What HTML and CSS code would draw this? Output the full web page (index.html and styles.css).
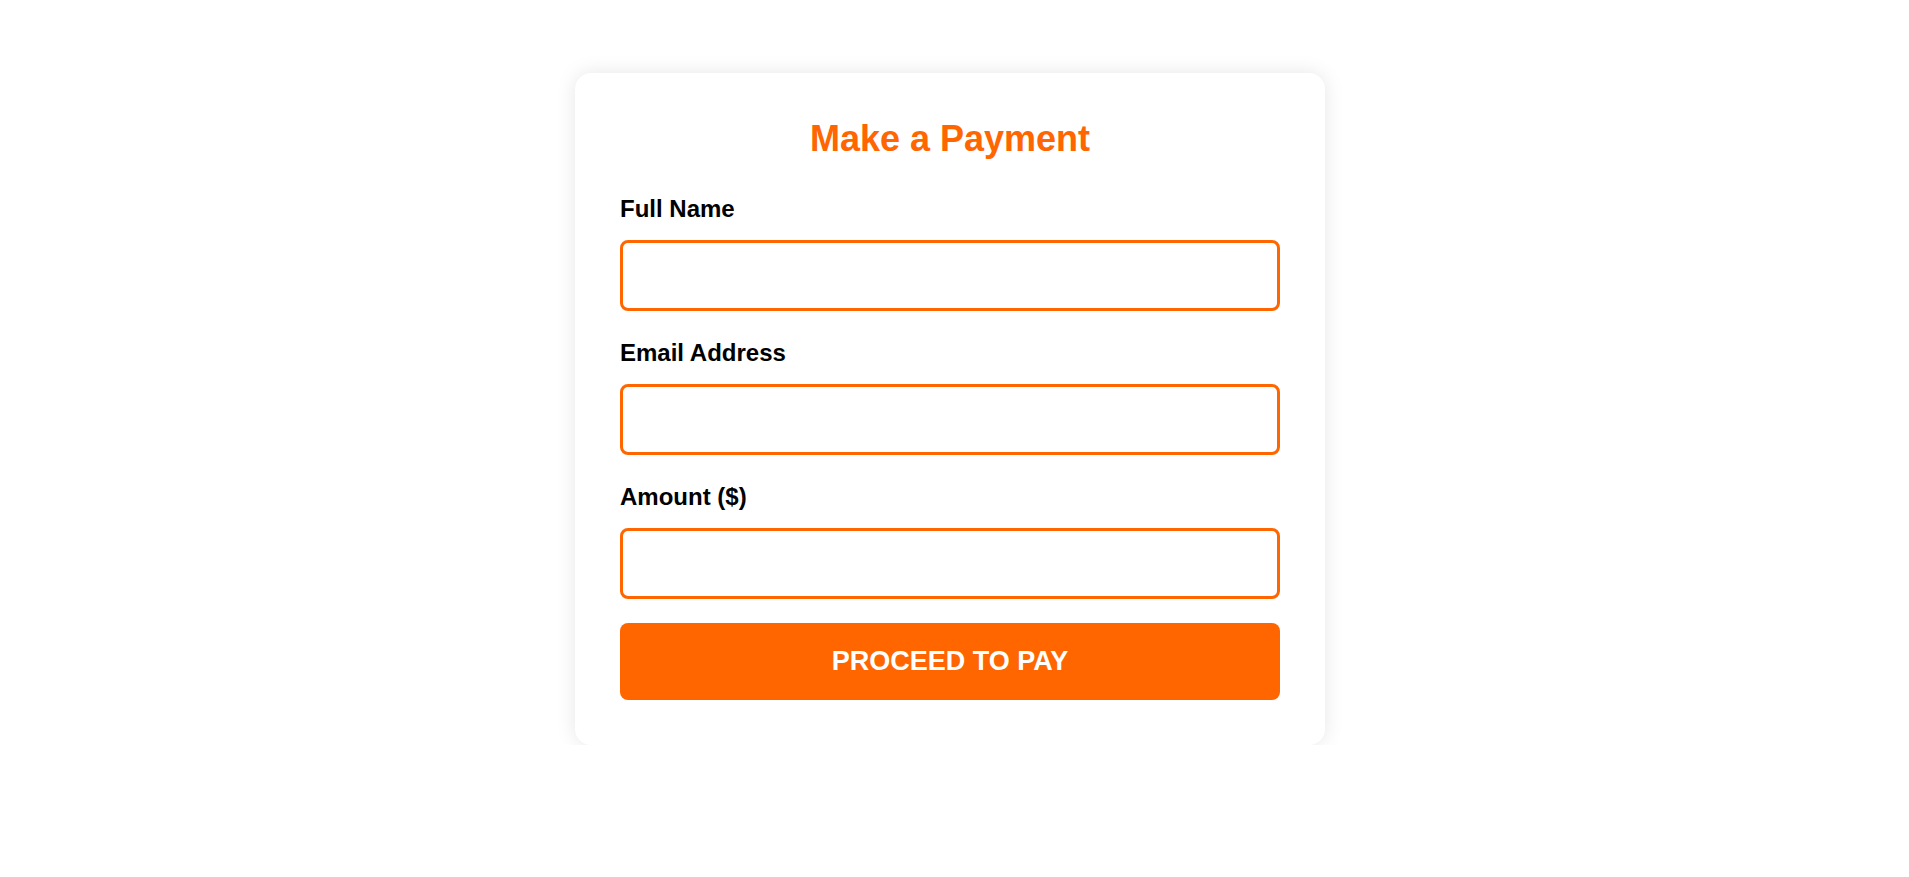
FILE: index.html
```html
<!DOCTYPE html>
<html lang="en">
<head>
<meta charset="utf-8">
<title>Make a Payment</title>
<link rel="stylesheet" href="styles.css">
</head>
<body>
<main class="page">
  <form class="card">
    <h2 class="title">Make a Payment</h2>
    <div class="field">
      <label class="label" for="name">Full Name</label>
      <input class="input" id="name" type="text">
    </div>
    <div class="field">
      <label class="label" for="email">Email Address</label>
      <input class="input" id="email" type="email">
    </div>
    <div class="field">
      <label class="label" for="amount">Amount ($)</label>
      <input class="input" id="amount" type="text">
    </div>
    <button class="pay" type="button">PROCEED TO PAY</button>
  </form>
</main>
</body>
</html>
```

FILE: styles.css
```css
* { box-sizing: border-box; }

html, body {
  margin: 0;
  padding: 0;
  background: #ffffff;
  font-family: "Liberation Sans", Arial, sans-serif;
}

.page {
  display: flex;
  justify-content: center;
  padding: 73px 9px 0 0;
}

.card {
  width: 750px;
  padding: 45px;
  background: #ffffff;
  border-radius: 16px;
  box-shadow: 0 0 20px rgba(0, 0, 0, 0.1);
  display: flex;
  flex-direction: column;
}

.title {
  margin: 0 0 35px;
  font-size: 36px;
  line-height: 42px;
  font-weight: bold;
  color: #ff6600;
  text-align: center;
}

.field {
  display: flex;
  flex-direction: column;
  margin-bottom: 28px;
}

.field:last-of-type {
  margin-bottom: 24px;
}

.label {
  font-size: 24px;
  line-height: 28px;
  font-weight: bold;
  color: #000000;
  margin-bottom: 17px;
}

.input {
  height: 71px;
  border: 3px solid #ff6600;
  border-radius: 8px;
  background: #ffffff;
  padding: 0 18px;
  font-family: inherit;
  font-size: 20px;
  outline: none;
}

.pay {
  height: 77px;
  border: none;
  border-radius: 8px;
  background: #ff6600;
  color: #ffffff;
  font-family: inherit;
  font-size: 27px;
  font-weight: bold;
  cursor: pointer;
}
```
